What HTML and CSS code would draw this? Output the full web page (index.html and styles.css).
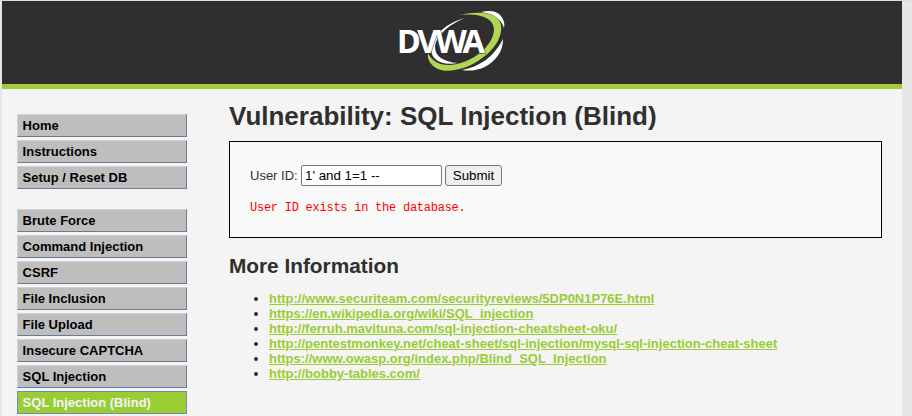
FILE: index.html
```html
<!DOCTYPE html>
<html lang="en">
<head>
<meta charset="utf-8">
<title>Vulnerability: SQL Injection (Blind)</title>
<link rel="stylesheet" href="styles.css">
</head>
<body>
<div class="container">
  <header class="header">
    <svg class="logo" width="108" height="64" viewBox="0 0 108 64" role="img" aria-label="DVWA">
      <path fill="#fff" d="M83 2C92 0 99 1 103 6C106 10 107 14 106 18C103 9 97 4 83 2Z"/>
      <path fill="#fff" d="M105 29C105 39 101 46 94 52C86 59 75 62 64 60C81 57 96 47 105 29Z"/>
      <path fill="#b0d653" d="M61 5C80 1 95 2 101 10C108 22 98 40 80 51C66 60 49 63 40 59C32 55 29 49 30 43C35 53 45 57 59 54C80 49 95 34 96 20C96 9 84 3 61 5Z"/>
      <path fill="#fff" d="M67 8C50 15 38 26 37 37C37 46 45 52 60 53C42 56 33 49 33 39C34 26 48 13 67 8Z"/>
      <text class="logo-text" x="-1" y="42.5">DVWA</text>
    </svg>
  </header>
  <div class="body">
    <nav class="menu">
      <ul class="menu-group">
        <li>Home</li>
        <li>Instructions</li>
        <li>Setup / Reset DB</li>
      </ul>
      <ul class="menu-group">
        <li>Brute Force</li>
        <li>Command Injection</li>
        <li>CSRF</li>
        <li>File Inclusion</li>
        <li>File Upload</li>
        <li>Insecure CAPTCHA</li>
        <li>SQL Injection</li>
        <li class="selected">SQL Injection (Blind)</li>
      </ul>
    </nav>
    <main class="main">
      <h1>Vulnerability: SQL Injection (Blind)</h1>
      <section class="panel">
        <form class="form">
          <label for="uid">User ID:</label>
          <input id="uid" type="text" value="1' and 1=1 -- ">
          <button type="button">Submit</button>
        </form>
        <pre>User ID exists in the database.</pre>
      </section>
      <h2>More Information</h2>
      <ul class="links">
        <li><a href="#">http://www.securiteam.com/securityreviews/5DP0N1P76E.html</a></li>
        <li><a href="#">https://en.wikipedia.org/wiki/SQL_injection</a></li>
        <li><a href="#">http://ferruh.mavituna.com/sql-injection-cheatsheet-oku/</a></li>
        <li><a href="#">http://pentestmonkey.net/cheat-sheet/sql-injection/mysql-sql-injection-cheat-sheet</a></li>
        <li><a href="#">https://www.owasp.org/index.php/Blind_SQL_Injection</a></li>
        <li><a href="#">http://bobby-tables.com/</a></li>
      </ul>
    </main>
  </div>
</div>
</body>
</html>
```
FILE: styles.css
```css
* { box-sizing: border-box; }
html { overflow: hidden; }
body {
  margin: 0;
  padding: 1px 10px 0 2px;
  height: 416px;
  overflow: hidden;
  background: linear-gradient(#dbe3df 1px, #e7e7e7 1px);
  color: #2f2f2f;
  font: 13px/15px "Liberation Sans", Arial, sans-serif;
}
.container { width: 900px; height: 415px; background: #f4f4f4; }
.header {
  height: 88px;
  padding: 9px 0 0 396px;
  background: #2f2f2f;
  border-bottom: 5px solid #a1cc33;
}
.logo { display: block; }
.logo-text {
  fill: #fff;
  stroke: #2f2f2f;
  stroke-width: 1px;
  paint-order: stroke;
  font: 700 32.5px "Noto Sans", sans-serif;
  letter-spacing: -3.1px;
}
.body { display: flex; }
.menu { width: 185px; padding: 25px 0 0 15px; }
.menu-group { margin: 0 0 20px; padding: 0; list-style: none; }
.menu-group li {
  height: 23px;
  margin-bottom: 3px;
  padding-left: 4.6px;
  border: 1px solid;
  border-color: #d0d3d6 #6d7b99 #6d7b99 #d0d3d6;
  background: #bebebe;
  color: #000;
  font-weight: bold;
  line-height: 21px;
}
.menu-group .selected {
  border-color: #708fae;
  background: #9acc33;
  color: #f4f4f4;
}
.main { width: 653px; margin-left: 42px; }
h1 { margin: 12px 0 10px; font-size: 26px; line-height: 30px; }
.panel {
  height: 97px;
  padding: 23px 20px 0;
  border: 1px solid #000;
  background: #f8faf9;
}
.form { display: flex; align-items: center; height: 21px; }
.form label { width: 51px; line-height: 15px; padding-bottom: 1px; }
.form input {
  width: 141px;
  height: 21px;
  padding: 1px 3px;
  border: 1px solid #767676;
  border-radius: 2px;
  background: #fff;
  color: #000;
  font: 13.33px "Liberation Sans", Arial, sans-serif;
}
.form button {
  width: 57px;
  height: 21px;
  margin-left: 3px;
  padding: 0;
  border: 1px solid #767676;
  border-radius: 3px;
  background: #efefef;
  color: #000;
  font: 13.33px "Liberation Sans", Arial, sans-serif;
}
pre {
  margin: 15px 0 0;
  color: #f00;
  font: 12px/15px "Liberation Mono", monospace;
  letter-spacing: -0.25px;
}
h2 { margin: 15px 0 13px; padding-top: 1px; font-size: 20.8px; line-height: 24px; }
.links { margin: 0; padding-left: 40px; }
.links a { color: #9acc33; font-weight: bold; }
```
